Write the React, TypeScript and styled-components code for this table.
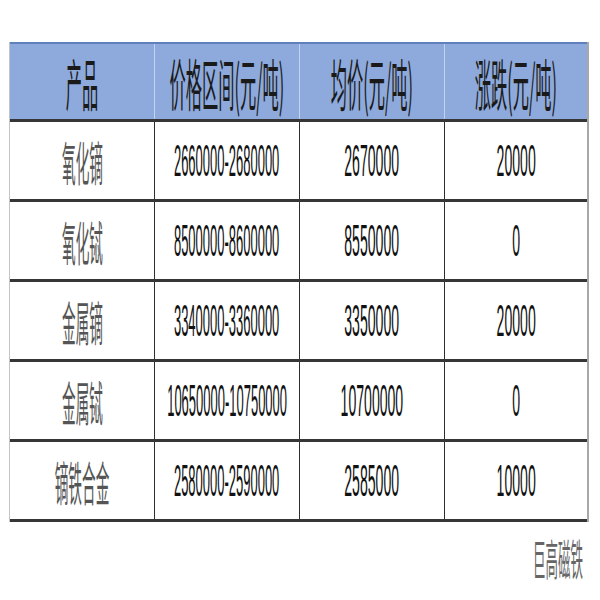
import styled, { createGlobalStyle } from "styled-components";

const GlobalStyle = createGlobalStyle`
    html, body {
        margin: 0;
        padding: 0;
        background: #fff;
    }
`

type Row = {
    product: string,
    range: string,
    average: string,
    change: string
}

const rows: Row[] = [
    { product: "氧化镝", range: "2660000-2680000", average: "2670000", change: "20000" },
    { product: "氧化铽", range: "8500000-8600000", average: "8550000", change: "0" },
    { product: "金属镝", range: "3340000-3360000", average: "3350000", change: "20000" },
    { product: "金属铽", range: "10650000-10750000", average: "10700000", change: "0" },
    { product: "镝铁合金", range: "2580000-2590000", average: "2585000", change: "10000" },
]

const headers = ["产品", "价格区间(元/吨)", "均价(元/吨)", "涨跌(元/吨)"]

const Page = styled.div`
    width: 600px;
    height: 600px;
    padding: 42px 0 0 9px;
    box-sizing: border-box;
    background: #fff;
`

const Table = styled.div`
    width: 580px;
    border-left: 1px solid #c4c4c4;
    border-right: 2px solid #a8a8a8;
    box-sizing: border-box;
`

const TableRow = styled.div<{ $head?: boolean }>`
    display: grid;
    grid-template-columns: 145px 145px 145px 1fr;
    height: 80px;
    box-sizing: border-box;
    background: ${p => p.$head ? "#8eaadc" : "#fff"};
    border-top: ${p => p.$head ? "2px solid #5f7fbd" : "none"};
    border-bottom: 3px solid #363636;
`

const Cell = styled.div<{ $head?: boolean }>`
    display: flex;
    align-items: center;
    justify-content: center;
    min-width: 0;
    box-sizing: border-box;
    border-right: 1px solid ${p => p.$head ? "#c3d2ee" : "#2e2e2e"};

    &:last-child {
        border-right: none;
    }
`

const Squeezed = styled.span<{ $size: number, $scale: number, $color: string, $font: string, $origin?: string }>`
    display: inline-block;
    flex-shrink: 0;
    white-space: nowrap;
    font-family: ${p => p.$font};
    font-size: ${p => p.$size}px;
    line-height: 1;
    color: ${p => p.$color};
    transform: scaleX(${p => p.$scale});
    transform-origin: ${p => p.$origin || "center"};
`

const cjkFont = `"Noto Sans CJK SC", "Noto Sans", sans-serif`
const numFont = `"Liberation Sans", Arial, sans-serif`

const Footer = styled.div`
    width: 580px;
    display: flex;
    justify-content: flex-end;
    padding-top: 14px;
    padding-right: 6px;
    box-sizing: border-box;
`

function HeadText({ text }: { text: string }) {
    return <Squeezed $size={56} $scale={0.29} $color="#1a1a1a" $font={cjkFont}>{text}</Squeezed>
}

function NumText({ text, range }: { text: string, range?: boolean }) {
    return <Squeezed $size={44} $scale={range ? 0.295 : 0.32} $color="#111" $font={numFont}>{text}</Squeezed>
}

export default function App() {
    return <Page>
        <GlobalStyle />
        <Table>
            <TableRow $head>
                {headers.map(h => <Cell $head key={h}><HeadText text={h} /></Cell>)}
            </TableRow>
            {rows.map(row => <TableRow key={row.product}>
                <Cell>
                    <Squeezed $size={47} $scale={0.29} $color="#555" $font={cjkFont}>{row.product}</Squeezed>
                </Cell>
                <Cell><NumText text={row.range} range /></Cell>
                <Cell><NumText text={row.average} /></Cell>
                <Cell><NumText text={row.change} /></Cell>
            </TableRow>)}
        </Table>
        <Footer>
            <Squeezed $size={43} $scale={0.29} $color="#666" $font={cjkFont} $origin="right center">巨高磁铁</Squeezed>
        </Footer>
    </Page>;
}
